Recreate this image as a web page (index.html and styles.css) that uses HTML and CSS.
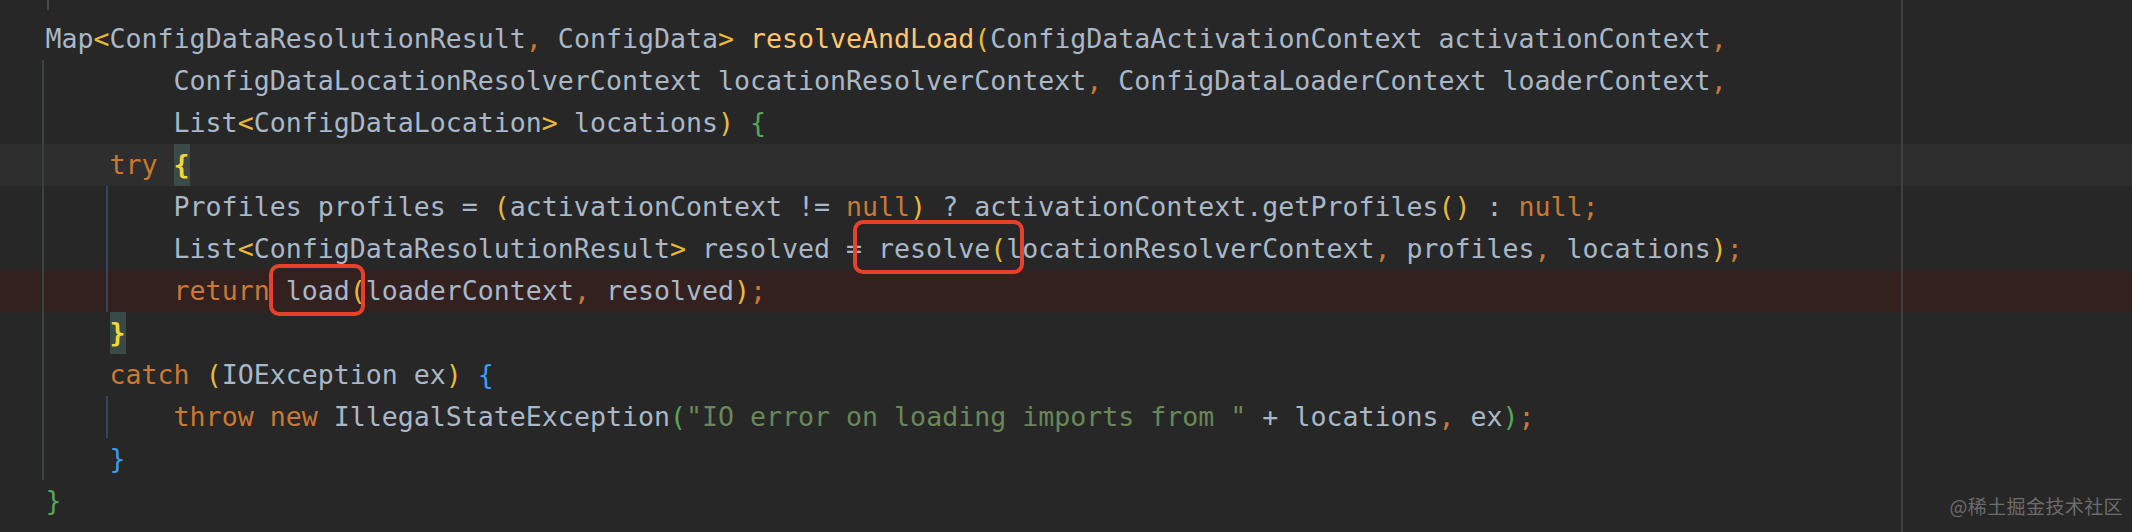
FILE: index.html
```html
<!DOCTYPE html>
<html lang="en">
<head>
<meta charset="utf-8">
<title>resolveAndLoad</title>
<link rel="stylesheet" href="styles.css">
</head>
<body>
<div class="editor">
  <div class="code">
    <div class="line">Map<span class="y">&lt;</span>ConfigDataResolutionResult<span class="p">,</span> ConfigData<span class="y">&gt;</span> <span class="f">resolveAndLoad</span><span class="y">(</span>ConfigDataActivationContext activationContext<span class="p">,</span></div>
    <div class="line">        ConfigDataLocationResolverContext locationResolverContext<span class="p">,</span> ConfigDataLoaderContext loaderContext<span class="p">,</span></div>
    <div class="line">        List<span class="y">&lt;</span>ConfigDataLocation<span class="y">&gt;</span> locations<span class="y">)</span> <span class="g">{</span></div>
    <div class="line current">    <span class="k">try</span> <span class="match">{</span></div>
    <div class="line">        Profiles profiles = <span class="y">(</span>activationContext != <span class="k">null</span><span class="y">)</span> ? activationContext.getProfiles<span class="y">()</span> : <span class="k">null</span><span class="p">;</span></div>
    <div class="line">        List<span class="y">&lt;</span>ConfigDataResolutionResult<span class="y">&gt;</span> resolved = resolve<span class="y">(</span>locationResolverContext<span class="p">,</span> profiles<span class="p">,</span> locations<span class="y">)</span><span class="p">;</span></div>
    <div class="line error">        <span class="k">return</span> load<span class="y">(</span>loaderContext<span class="p">,</span> resolved<span class="y">)</span><span class="p">;</span></div>
    <div class="line">    <span class="match">}</span></div>
    <div class="line">    <span class="k">catch</span> <span class="y">(</span>IOException ex<span class="y">)</span> <span class="b">{</span></div>
    <div class="line">        <span class="k">throw new</span> IllegalStateException<span class="g">(</span><span class="s">"IO error on loading imports from "</span> + locations<span class="p">,</span> ex<span class="g">)</span><span class="p">;</span></div>
    <div class="line">    <span class="b">}</span></div>
    <div class="line"><span class="g">}</span></div>
  </div>

  <div class="margin-line"></div>
  <div class="guide guide-top"></div>
  <div class="guide guide-method"></div>
  <div class="guide guide-try"></div>
  <div class="guide guide-catch"></div>

  <div class="mark mark-resolve"></div>
  <div class="mark mark-load"></div>

  <div class="watermark">@稀土掘金技术社区</div>
</div>
</body>
</html>
```

FILE: styles.css
```css
* {
  box-sizing: border-box;
}

html, body {
  margin: 0;
  padding: 0;
  background: #272727;
}

.editor {
  position: relative;
  width: 2132px;
  height: 532px;
  overflow: hidden;
  background: #272727;
  padding-top: 18px;
}

.code {
  font-family: "DejaVu Sans Mono", "Liberation Mono", monospace;
  font-size: 26.6px;
  color: #a9b7c6;
}

.line {
  height: 42px;
  line-height: 42px;
  padding-left: 45.5px;
  white-space: pre;
}

.line.current {
  background: #2e2e2e;
}

.line.error {
  background: #332120;
}

.k { color: #cc7832; }
.p { color: #cc7832; }
.f { color: #ffc66d; }
.s { color: #6a8759; }
.y { color: #e8ba36; }
.g { color: #54a857; }
.b { color: #359ff4; }

.match {
  display: inline-block;
  vertical-align: top;
  height: 42px;
  background: #3a4a46;
  color: #f3d53a;
  font-weight: bold;
}

.margin-line {
  position: absolute;
  left: 1901px;
  top: 0;
  width: 2px;
  height: 532px;
  background: #3f3f3f;
}

.guide {
  position: absolute;
  width: 2px;
}

.guide-top {
  left: 47px;
  top: 0;
  height: 10px;
  background: #4a4a4a;
}

.guide-method {
  left: 42px;
  top: 60px;
  height: 420px;
  background: #37433c;
}

.guide-try {
  left: 106px;
  top: 186px;
  height: 126px;
  background: #384657;
}

.guide-catch {
  left: 106px;
  top: 396px;
  height: 42px;
  background: #384657;
}

.mark {
  position: absolute;
  border: 4px solid #e8412b;
  border-radius: 10px;
}

.mark-resolve {
  left: 853px;
  top: 220px;
  width: 171px;
  height: 54px;
}

.mark-load {
  left: 269px;
  top: 264px;
  width: 96px;
  height: 52px;
}

.watermark {
  position: absolute;
  right: 9px;
  bottom: 15px;
  font-family: "Noto Sans CJK SC", "Noto Sans", sans-serif;
  font-size: 19px;
  line-height: 22px;
  color: #6c6c6c;
  letter-spacing: 0.4px;
}
```
